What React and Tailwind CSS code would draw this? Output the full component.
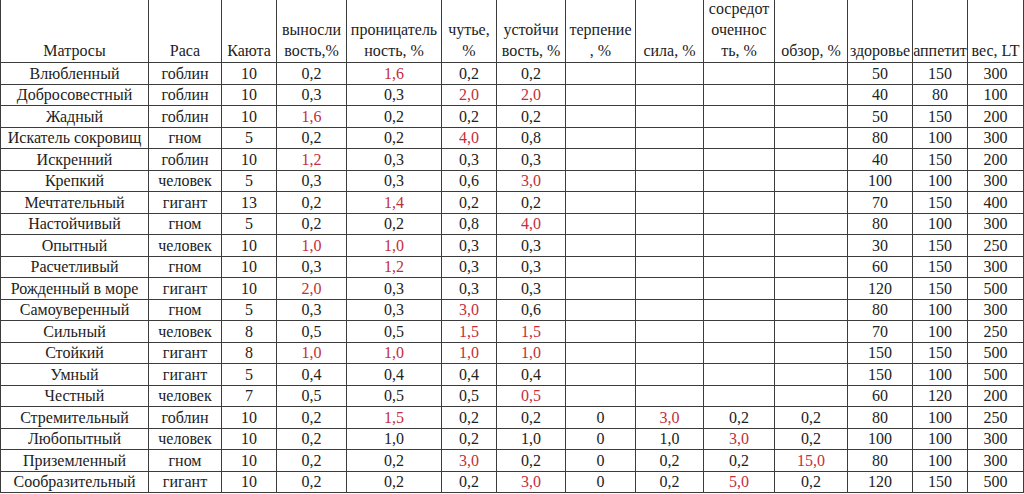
import React from 'react';

const headers = [
  ['Матросы'],
  ['Раса'],
  ['Каюта'],
  ['выносли', 'вость,%'],
  ['проницатель', 'ность, %'],
  ['чутье,', '%'],
  ['устойчи', 'вость, %'],
  ['терпение', ', %'],
  ['сила, %'],
  ['сосредот', 'оченнос', 'ть, %'],
  ['обзор, %'],
  ['здоровье'],
  ['аппетит'],
  ['вес, LT'],
];

// "!" marks a value printed in red
const rows = [
  ['Влюбленный', 'гоблин', '10', '0,2', '!1,6', '0,2', '0,2', '', '', '', '', '50', '150', '300'],
  ['Добросовестный', 'гоблин', '10', '0,3', '0,3', '!2,0', '!2,0', '', '', '', '', '40', '80', '100'],
  ['Жадный', 'гоблин', '10', '!1,6', '0,2', '0,2', '0,2', '', '', '', '', '50', '150', '200'],
  ['Искатель сокровищ', 'гном', '5', '0,2', '0,2', '!4,0', '0,8', '', '', '', '', '80', '100', '300'],
  ['Искренний', 'гоблин', '10', '!1,2', '0,3', '0,3', '0,3', '', '', '', '', '40', '150', '200'],
  ['Крепкий', 'человек', '5', '0,3', '0,3', '0,6', '!3,0', '', '', '', '', '100', '100', '300'],
  ['Мечтательный', 'гигант', '13', '0,2', '!1,4', '0,2', '0,2', '', '', '', '', '70', '150', '400'],
  ['Настойчивый', 'гном', '5', '0,2', '0,2', '0,8', '!4,0', '', '', '', '', '80', '100', '300'],
  ['Опытный', 'человек', '10', '!1,0', '!1,0', '0,3', '0,3', '', '', '', '', '30', '150', '250'],
  ['Расчетливый', 'гном', '10', '0,3', '!1,2', '0,3', '0,3', '', '', '', '', '60', '150', '300'],
  ['Рожденный в море', 'гигант', '10', '!2,0', '0,3', '0,3', '0,3', '', '', '', '', '120', '150', '500'],
  ['Самоуверенный', 'гном', '5', '0,3', '0,3', '!3,0', '0,6', '', '', '', '', '80', '100', '300'],
  ['Сильный', 'человек', '8', '0,5', '0,5', '!1,5', '!1,5', '', '', '', '', '70', '100', '250'],
  ['Стойкий', 'гигант', '8', '!1,0', '!1,0', '!1,0', '!1,0', '', '', '', '', '150', '150', '500'],
  ['Умный', 'гигант', '5', '0,4', '0,4', '0,4', '0,4', '', '', '', '', '150', '100', '500'],
  ['Честный', 'человек', '7', '0,5', '0,5', '0,5', '!0,5', '', '', '', '', '60', '120', '200'],
  ['Стремительный', 'гоблин', '10', '0,2', '!1,5', '0,2', '0,2', '0', '!3,0', '0,2', '0,2', '80', '100', '250'],
  ['Любопытный', 'человек', '10', '0,2', '1,0', '0,2', '1,0', '0', '1,0', '!3,0', '0,2', '100', '100', '300'],
  ['Приземленный', 'гном', '10', '0,2', '0,2', '!3,0', '0,2', '0', '0,2', '0,2', '!15,0', '80', '100', '300'],
  ['Сообразительный', 'гигант', '10', '0,2', '0,2', '0,2', '!3,0', '0', '0,2', '!5,0', '0,2', '120', '150', '500'],
];

const Cell = ({ value, first }) => {
  const red = value.startsWith('!');
  return (
    <div
      className={`h-[21.5px] flex items-center justify-center border-r border-b border-[#3c3c3c] whitespace-nowrap overflow-hidden ${
        first ? 'border-l' : ''
      } ${red ? 'text-[#c42e3b]' : 'text-[#222]'}`}
    >
      {red ? value.slice(1) : value}
    </div>
  );
};

export default function App() {
  return (
    <div className="w-[1024px] h-[494px] bg-white overflow-hidden font-[family-name:Liberation_Serif,serif] text-[16px] leading-[21px]">
      <div className="grid grid-cols-[149px_73px_55px_70px_95px_55px_69px_70px_68px_71px_73px_65px_55px_56px]">
        {headers.map((lines, i) => (
          <div
            key={i}
            className={`h-[63px] flex flex-col justify-end items-center pb-[1px] border-r border-b border-[#3c3c3c] text-[#222] whitespace-nowrap ${
              i === 0 ? 'border-l' : ''
            }`}
          >
            {lines.map((l) => (
              <span key={l}>{l}</span>
            ))}
          </div>
        ))}
        {rows.map((row, r) =>
          row.map((v, c) => <Cell key={`${r}-${c}`} value={v} first={c === 0} />)
        )}
      </div>
    </div>
  );
}
